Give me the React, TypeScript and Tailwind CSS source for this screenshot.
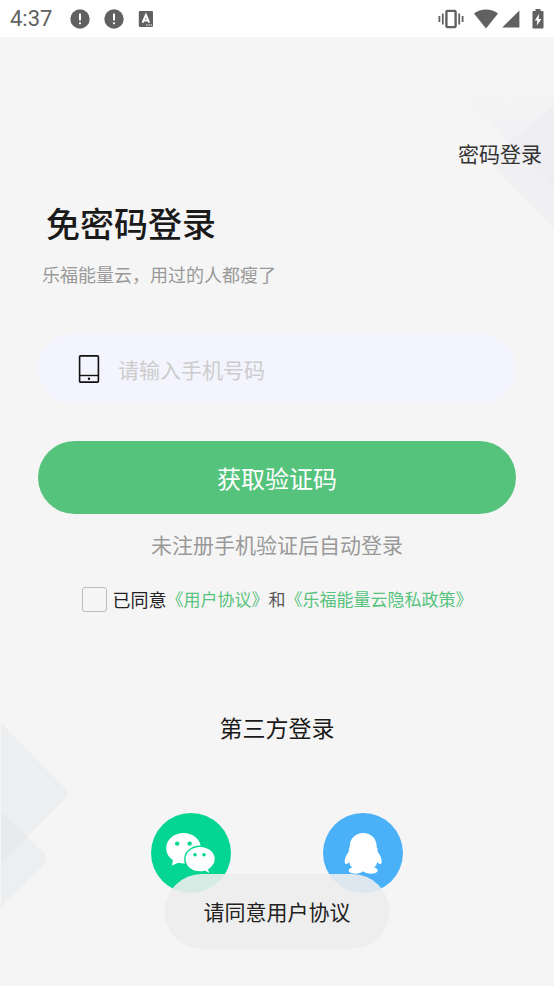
import { useState } from "react";

const AlertIcon = () => (
  <svg viewBox="0 0 20 20" className="h-5 w-5" aria-hidden="true">
    <circle cx="10" cy="10" r="9.7" fill="#616161" />
    <rect x="9" y="4.6" width="2" height="7" rx="0.6" fill="#fff" />
    <rect x="9" y="13.2" width="2" height="2" rx="0.6" fill="#fff" />
  </svg>
);

const KeyboardIcon = () => (
  <svg viewBox="0 0 16 18" className="h-[18px] w-4" aria-hidden="true">
    <rect x="0.8" y="1" width="14.2" height="16" rx="1.2" fill="#616161" />
    <path
      d="M4.6 12.6 7.9 5l3.3 7.6M5.8 10.4h4.2"
      fill="none"
      stroke="#fff"
      strokeWidth="2"
    />
    <path d="M8 15h1.4M10.3 15h1.4M12.6 15H14" stroke="#fff" strokeWidth="1" />
  </svg>
);

const VibrateIcon = () => (
  <svg viewBox="0 0 26 20" className="h-5 w-[26px]" aria-hidden="true">
    <rect
      x="8.4"
      y="1.9"
      width="9.2"
      height="16.2"
      rx="1"
      fill="none"
      stroke="#616161"
      strokeWidth="2.4"
    />
    <path
      d="M4.8 4.5v11M21.2 4.5v11M1.4 7v6M24.6 7v6"
      stroke="#616161"
      strokeWidth="1.8"
    />
  </svg>
);

const WifiIcon = () => (
  <svg viewBox="0 0 24 20" className="h-5 w-6" aria-hidden="true">
    <path d="M12 19.4 0 4.6C3.4 2 7.4.6 12 .6S20.6 2 24 4.6Z" fill="#616161" />
  </svg>
);

const SignalIcon = () => (
  <svg viewBox="0 0 18 18" className="h-[18px] w-[18px]" aria-hidden="true">
    <path d="M17.4.4v17.2H.2Z" fill="#616161" />
  </svg>
);

const BatteryIcon = () => (
  <svg viewBox="0 0 12 20" className="h-5 w-3" aria-hidden="true">
    <path
      d="M3.5 0h5v2h1.9c.6 0 1.1.5 1.1 1.1v15.3c0 .6-.5 1.1-1.1 1.1H1.6c-.6 0-1.1-.5-1.1-1.1V3.1C.5 2.5 1 2 1.6 2h1.9Z"
      fill="#616161"
    />
    <path d="M7.2 4.8 2.8 11.4h2.5L4.8 16.8l4.5-6.9H6.7Z" fill="#fff" />
  </svg>
);

const PhoneIcon = () => (
  <svg viewBox="0 0 22 28" className="h-7 w-[22px]" aria-hidden="true">
    <rect
      x="1.6"
      y="0.9"
      width="18.8"
      height="26.2"
      rx="0.8"
      fill="none"
      stroke="#111"
      strokeWidth="1.6"
    />
    <path d="M1.6 20.5h18.8" stroke="#111" strokeWidth="1.4" />
    <circle cx="11" cy="23.8" r="1.2" fill="#111" />
  </svg>
);

const WechatIcon = () => (
  <svg viewBox="0 0 80 80" className="h-20 w-20" aria-hidden="true">
    <circle cx="40" cy="40" r="40" fill="#04d593" />
    <path
      d="M32.5 20C22.8 20 15.2 26.8 15.2 35.3c0 4.9 2.6 9 6.7 11.8l-.9 5.5 6.3-2.8c2 .5 3.6.7 5.7.7C42.2 50.5 50 43.8 50 35.3S42.2 20 32.5 20Z"
      fill="#fff"
    />
    <circle cx="26.2" cy="30.6" r="2.2" fill="#04d593" />
    <circle cx="38.7" cy="30.6" r="2.2" fill="#04d593" />
    <path
      d="M49 33.2c-8.600 0-15.200 5.700-15.200 12.900S40.400 59 49 59c1.800 0 3.400-.2 5-.7l5.200 3.200-1.300-5c3.600-2.300 6.500-6 6.500-10.400 0-7.200-6.800-12.900-15.400-12.900Z"
      fill="#fff"
      stroke="#04d593"
      strokeWidth="1.4"
    />
    <circle cx="44" cy="41.7" r="1.8" fill="#04d593" />
    <circle cx="53" cy="41.7" r="1.8" fill="#04d593" />
  </svg>
);

const QqIcon = () => (
  <svg viewBox="0 0 80 80" className="h-20 w-20" aria-hidden="true">
    <circle cx="40" cy="40" r="40" fill="#4ab1f8" />
    <path
      d="M40.2 20C32.4 20 27 25.8 26.8 32.5c0 1-.1 1.7-.5 2.6-.6 1.2-.5 2.2-.4 3.3-2.5 3.3-4.2 6.8-4.2 9.800 0 1.700.6 2.900 1.500 2.900 1 0 2-.8 2.900-2 .5 2.300 1.600 4.200 3.200 5.500-2.300.5-3.600 1.500-3.600 3 0 2 2.800 3.100 6.600 3.100 3.500 0 6.300-1 7.900-2.400 1.600 1.400 4.400 2.400 7.900 2.400 3.800 0 6.600-1.100 6.600-3.100 0-1.500-1.300-2.500-3.600-3 1.600-1.300 2.700-3.200 3.200-5.500.9 1.200 1.900 2 2.900 2 .9 0 1.500-1.200 1.500-2.900 0-3-1.700-6.500-4.200-9.800.1-1.100.2-2.100-.4-3.300-.4-.9-.5-1.600-.5-2.600C53.400 25.800 48 20 40.200 20Z"
      fill="#fff"
    />
  </svg>
);

const StatusBar = () => (
  <div className="flex h-[37px] items-center justify-between bg-white px-2.5">
    <div className="flex items-center">
      <span className="mr-[18px] font-['Roboto'] text-[22px] leading-none text-[#616161]">
        4:37
      </span>
      <div className="flex items-center gap-3.5">
        <AlertIcon />
        <AlertIcon />
        <KeyboardIcon />
      </div>
    </div>
    <div className="flex items-center">
      <VibrateIcon />
      <span className="ml-2.5 flex items-center gap-1">
        <WifiIcon />
        <SignalIcon />
      </span>
      <span className="ml-3">
        <BatteryIcon />
      </span>
    </div>
  </div>
);

const Backdrop = () => (
  <>
    <svg
      viewBox="0 0 110 150"
      className="pointer-events-none absolute right-0 top-20 h-[150px] w-[110px]"
      aria-hidden="true"
    >
      <defs>
        <linearGradient id="fade" x1="0" y1="0" x2="0" y2="1">
          <stop offset="0" stopColor="#ebecf2" stopOpacity="0" />
          <stop offset="1" stopColor="#ebecf2" stopOpacity="0.8" />
        </linearGradient>
      </defs>
      <path d="M10 9h100v98Z" fill="url(#fade)" />
      <path
        d="M110 25 47 76q-4 4 0 8l63 64Z"
        fill="#ebecf2"
        fillOpacity="0.45"
      />
    </svg>
    <svg
      viewBox="0 0 70 190"
      className="pointer-events-none absolute bottom-[76px] left-0 h-[190px] w-[70px]"
      aria-hidden="true"
    >
      <path d="M1 3 66 69q4 4 0 9L1 143Z" fill="#dfe2e7" fillOpacity="0.35" />
      <path d="M1 91 45 134q4 4 0 9L1 188Z" fill="#dfe2e7" fillOpacity="0.35" />
    </svg>
  </>
);

export default function App() {
  const [phone, setPhone] = useState("");
  const [agreed, setAgreed] = useState(false);

  return (
    <div className="relative min-h-screen bg-[#f5f5f5] font-['Noto_Sans_CJK_SC',sans-serif] text-[#1a1a1a]">
      <Backdrop />
      <div className="relative">
        <StatusBar />

        <header className="flex justify-end px-3 pt-[100px]">
          <a href="#password" className="text-[21px] leading-8 text-[#333]">
            密码登录
          </a>
        </header>

        <main className="px-[38px]">
          <h1 className="mt-[29px] pl-2 text-[34px] font-medium leading-[50px]">
            免密码登录
          </h1>
          <p className="mt-3 pl-1 text-lg text-[#999]">
            乐福能量云，用过的人都瘦了
          </p>

          <form onSubmit={(e) => e.preventDefault()}>
            <label className="mt-[46px] flex h-[70px] items-center gap-[18px] rounded-full bg-[#f3f4fd] px-10">
              <PhoneIcon />
              <input
                type="tel"
                name="phone"
                aria-label="请输入手机号码"
                placeholder="请输入手机号码"
                value={phone}
                onChange={(e) => setPhone(e.target.value)}
                className="min-w-0 flex-1 bg-transparent text-[21px] leading-8 outline-none placeholder:text-[#ccc]"
              />
            </label>

            <button
              type="submit"
              className="mt-[37px] h-[73px] w-full rounded-full bg-[#56c37d] text-2xl text-white"
            >
              获取验证码
            </button>
            <p className="mt-3.5 text-center text-[21px] leading-8 text-[#999]">
              未注册手机验证后自动登录
            </p>

            <div className="mt-[23px] flex items-center justify-center text-[17px] leading-8 text-[#555]">
              <input
                id="agree"
                type="checkbox"
                checked={agreed}
                onChange={(e) => setAgreed(e.target.checked)}
                className="mr-1.5 h-[25px] w-[25px] appearance-none rounded-[3px] border border-[#bbb] checked:bg-[#56c37d]"
              />
              <label htmlFor="agree" className="text-lg leading-8 text-[#222]">
                已同意
              </label>
              <a href="#terms" className="text-[#56c37d]">
                《用户协议》
              </a>
              和
              <a href="#privacy" className="text-[#56c37d]">
                《乐福能量云隐私政策》
              </a>
            </div>
          </form>

          <section className="mt-24">
            <h2 className="text-center text-[23px] leading-8">第三方登录</h2>
            <div className="mt-[70px] flex justify-center gap-[92px]">
              <button type="button" aria-label="微信登录">
                <WechatIcon />
              </button>
              <button type="button" aria-label="QQ登录">
                <QqIcon />
              </button>
            </div>
          </section>
        </main>
      </div>

      <div
        role="status"
        className="absolute bottom-[37px] left-1/2 -translate-x-1/2 whitespace-nowrap rounded-[38px] bg-[#ededed]/90 px-[39px] pb-[22px] pt-[21px] text-[21px] leading-8 text-[#222]"
      >
        请同意用户协议
      </div>
    </div>
  );
}
